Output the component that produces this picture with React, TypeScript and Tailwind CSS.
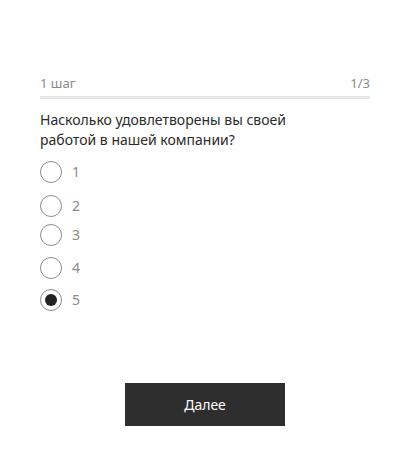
import { useState } from 'react';

const options = [
  { value: 1, className: 'mt-[11px]' },
  { value: 2, className: 'mt-[12px]' },
  { value: 3, className: 'mt-[7px]' },
  { value: 4, className: 'mt-[11px]' },
  { value: 5, className: 'mt-[10px]' },
];

export default function App() {
  const [selected, setSelected] = useState(5);

  return (
    <div className="w-[410px] h-[466px] bg-white font-['Noto_Sans',sans-serif] flex flex-col px-[40px] pt-[74px]">
      {/* Progress */}
      <div className="flex justify-between items-center text-[13px] leading-[18px] text-[#8a8a8a]">
        <span>1 шаг</span>
        <span>1/3</span>
      </div>
      <div className="mt-[4px] h-[3px] w-[330px] bg-[#e6e6e6]" />

      {/* Question */}
      <p className="mt-[11px] text-[14px] leading-[20px] text-[#2b2b2b]">
        Насколько удовлетворены вы своей
        <br />
        работой в нашей компании?
      </p>

      {/* Options */}
      <div className="flex flex-col">
        {options.map((o) => (
          <label
            key={o.value}
            className={`flex items-center gap-[10px] cursor-pointer ${o.className}`}
            onClick={() => setSelected(o.value)}
          >
            <span className="w-[22px] h-[22px] rounded-full border border-[#8c8c8c] flex items-center justify-center">
              {selected === o.value && <span className="w-[12px] h-[12px] rounded-full bg-[#222]" />}
            </span>
            <span className="text-[14px] leading-[20px] text-[#8a8a8a]">{o.value}</span>
          </label>
        ))}
      </div>

      {/* Action */}
      <div className="flex justify-center mt-[72px]">
        <button className="w-[160px] h-[43px] bg-[#2e2e2e] text-white text-[14px]">Далее</button>
      </div>
    </div>
  );
}
